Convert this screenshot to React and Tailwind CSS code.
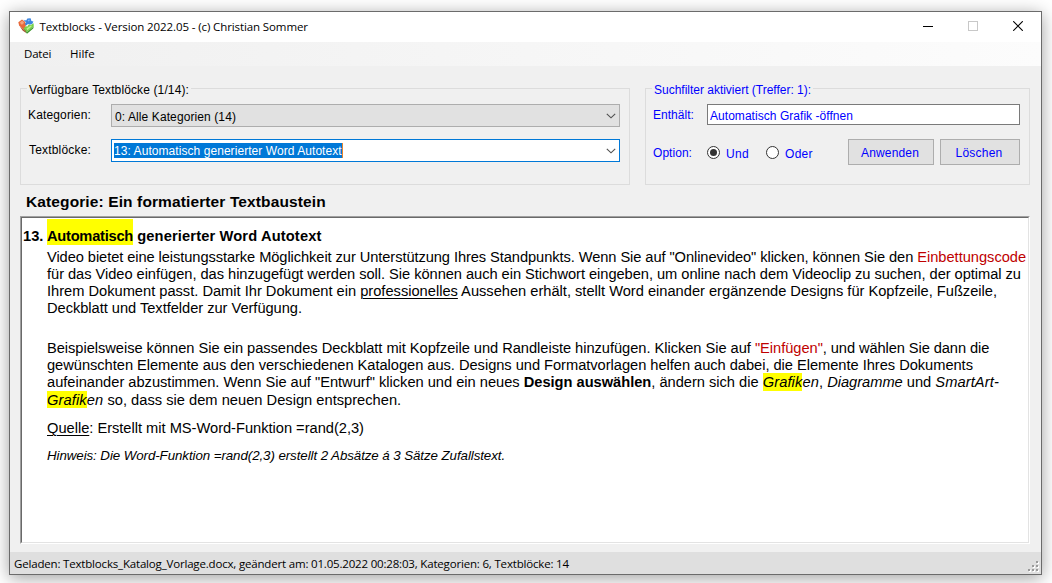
import React from "react";

function AppIcon() {
  return (
    <svg className="block h-4 w-4" viewBox="0 0 16 16">
      <path d="M0.3 4.2 L4 1.6 L6.8 3.4 L8.2 6.2 L7 10.5 L5.2 10.8 L1.2 7.4 Z" fill="#e8693a" />
      <path d="M1.2 7.4 L7.2 13.4 L8.4 15.2 L4.6 12.6 L0.6 6.6 Z" fill="#a8472c" />
      <path d="M1.2 7.2 L5.2 10.4 L7 9.4 L8.6 13.6 L7.6 14 Z" fill="#d9552c" />
      <path d="M2 4.2 L4.2 2.8 L6 4.2 L5 6.2 L3 6.4 Z" fill="#f4a27e" />
      <path d="M5.6 1.8 L8.2 2.6 L9.4 0.6 L12.6 0.2 L13.4 3 L15.4 3.6 L14.4 5.8 L11.8 6.8 L10 6 L8.2 7.4 L6.8 6 L8 4.4 Z" fill="#3d86e0" />
      <path d="M9.6 2.2 L11.2 1.6 L11.8 2.8 L10.4 3.6 Z" fill="#85b8f2" />
      <path d="M5.4 10.6 L8 8.2 L9.4 8.6 L10.4 6.8 L12.8 7 L15.6 5.2 L15.8 8.4 L9 14 Z" fill="#78d04a" />
      <path d="M8.4 10.4 L12.8 7.6 L14 8 L9.4 12.2 Z" fill="#b9f08b" />
      <path d="M5.4 10.8 L9 14 L15.8 8.4 L15.2 10.4 L9 15.8 Z" fill="#3b962a" />
    </svg>
  );
}

function Chevron() {
  return (
    <svg className="block h-[6px] w-[10px]" viewBox="0 0 10 6" fill="none">
      <path d="M0.8 0.8 L5 4.8 L9.2 0.8" stroke="#505050" strokeWidth="1.15" />
    </svg>
  );
}

function TitleBar() {
  return (
    <div className="flex h-[30px] shrink-0 items-center bg-white pl-2 font-['Open_Sans',sans-serif]">
      <div className="-mt-[3px]">
        <AppIcon />
      </div>
      <span className="ml-[5.5px] grow whitespace-nowrap text-[11.5px] leading-4 tracking-[-0.105px]">
        Textblocks - Version 2022.05 - (c) Christian Sommer
      </span>
      <div className="-mt-[2px] mr-[18px] flex items-center gap-[35px]">
        <svg className="block h-[10px] w-[10px]" viewBox="0 0 10 10">
          <rect x="0" y="5" width="10" height="1" fill="#000" />
        </svg>
        <svg className="block h-[10px] w-[10px]" viewBox="0 0 10 10">
          <rect x="0.5" y="0.5" width="9" height="9" fill="none" stroke="#c8c8c8" />
        </svg>
        <svg className="block h-[10px] w-[10px]" viewBox="0 0 10 10">
          <path d="M0.2 0.2 L9.8 9.8 M9.8 0.2 L0.2 9.8" stroke="#000" strokeWidth="1.1" />
        </svg>
      </div>
    </div>
  );
}

function MenuBar() {
  return (
    <div className="flex h-6 shrink-0 items-center bg-linear-to-r from-[#f0f0f0] to-[#fcfcfc] pl-[14px] font-['Open_Sans',sans-serif] text-[11.5px] leading-4">
      <span className="w-[46px] tracking-[-0.2px]">Datei</span>
      <span>Hilfe</span>
    </div>
  );
}

function CatalogGroup() {
  return (
    <fieldset className="h-[104px] w-[610px] border border-[#dcdcdc]">
      <legend className="ml-[6px] h-[15px] whitespace-nowrap px-[2px] leading-[19px] tracking-[0.119px]">
        Verfügbare Textblöcke (1/14):
      </legend>
      <div className="flex pl-[7px] pt-2">
        <span className="w-[83px] pt-[3px] leading-4 tracking-[0.146px]">Kategorien:</span>
        <div className="flex h-[23px] w-[509px] items-center justify-between border border-[#adadad] bg-[#e1e1e1] pl-[3px] pr-[3px]">
          <span className="pt-[3px] leading-4 tracking-[0.098px]">0: Alle Kategorien (14)</span>
          <Chevron />
        </div>
      </div>
      <div className="flex pl-2 pt-3">
        <span className="w-[82px] pt-[3px] leading-4 tracking-[0.179px]">Textblöcke:</span>
        <div className="flex h-[23px] w-[509px] items-center justify-between border border-[#0078d7] bg-white pl-[2px] pr-[3px]">
          <span className="h-[15px] border-r border-[#e8842a] bg-[#0078d7] leading-[17px] tracking-[0.06px] text-white">
            13: Automatisch generierter Word Autotext
          </span>
          <Chevron />
        </div>
      </div>
    </fieldset>
  );
}

function Radio({ checked }) {
  return (
    <svg className="block h-[13px] w-[13px]" viewBox="0 0 13 13">
      <circle cx="6.5" cy="6.5" r="6" fill="#fff" stroke="#333" />
      {checked && <circle cx="6.5" cy="6.5" r="3.5" fill="#333" />}
    </svg>
  );
}

function FilterGroup() {
  return (
    <fieldset className="h-[104px] w-[385px] border border-[#dcdcdc] text-[#0000ff]">
      <legend className="ml-[6px] h-[15px] whitespace-nowrap px-[2px] leading-[19px] tracking-[-0.011px]">
        Suchfilter aktiviert (Treffer: 1):
      </legend>
      <div className="flex pl-[7px] pt-2">
        <span className="w-[54px] pt-[3px] leading-4 tracking-[0.037px]">Enthält:</span>
        <div className="h-[21px] w-[313px] border border-[#7a7a7a] bg-white pl-[2px] pt-[3px] leading-4 tracking-[0.044px]">
          Automatisch Grafik -öffnen
        </div>
      </div>
      <div className="flex pl-[7px] pt-[14px]">
        <span className="w-[54px] pt-[6px] leading-4 tracking-[0.042px]">Option:</span>
        <div className="flex w-[141px] pt-[7px]">
          <Radio checked />
          <span className="ml-[6px] w-10 leading-4 tracking-[0.3px]">Und</span>
          <Radio />
          <span className="ml-[6px] leading-4 tracking-[0.3px]">Oder</span>
        </div>
        <button className="h-[26px] w-[86px] border border-[#adadad] bg-[#e1e1e1] pr-[2px] pt-[2px] leading-4 tracking-[0.16px]">
          Anwenden
        </button>
        <button className="ml-[6px] h-[26px] w-20 border border-[#adadad] bg-[#e1e1e1] pr-[2px] pt-[2px] leading-4 tracking-[0.232px]">
          Löschen
        </button>
      </div>
    </fieldset>
  );
}

function Preview() {
  return (
    <div className="ml-[10px] h-[328px] w-[1010px] border border-b-white border-l-[#a0a0a0] border-r-white border-t-[#a0a0a0]">
      <div className="h-full whitespace-nowrap border border-b-[#e3e3e3] border-l-[#696969] border-r-[#e3e3e3] border-t-[#696969] bg-white pt-[1px] text-[14.67px] leading-[19px]">
        <div className="flex h-[26px] pl-[1px] font-bold leading-[34px]">
          <span className="w-6">13.</span>
          <span className="h-[26px] w-[86px] bg-[#ffff00] tracking-[-0.25px]">Automatisch</span>
          <span className="whitespace-pre tracking-[0.14px]"> generierter Word Autotext</span>
        </div>
        <div className="pl-[25px] pt-[3px]">
          <p className="h-[17px] tracking-[-0.079px]">
            Video bietet eine leistungsstarke Möglichkeit zur Unterstützung Ihres Standpunkts. Wenn Sie auf "Onlinevideo"
            klicken, können Sie den <span className="tracking-[-0.02px] text-[#c00000]">Einbettungscode</span>
          </p>
          <p className="h-[17px] tracking-[-0.044px]">
            für das Video einfügen, das hinzugefügt werden soll. Sie können auch ein Stichwort eingeben, um online nach
            dem Videoclip zu suchen, der optimal zu
          </p>
          <p className="h-[17px] tracking-[-0.009px]">
            Ihrem Dokument passt. Damit Ihr Dokument ein{" "}
            <span className="underline decoration-1 underline-offset-2">professionelles</span> Aussehen erhält, stellt
            Word einander ergänzende Designs für Kopfzeile, Fußzeile,
          </p>
          <p className="h-[17px] tracking-[-0.035px]">Deckblatt und Textfelder zur Verfügung.</p>
          <p className="mt-[23px] h-[17px] tracking-[-0.039px]">
            Beispielsweise können Sie ein passendes Deckblatt mit Kopfzeile und Randleiste hinzufügen. Klicken Sie auf{" "}
            <span className="text-[#c00000]">"Einfügen"</span>
            <span className="tracking-[-0.09px]">, und wählen Sie dann die</span>
          </p>
          <p className="h-[17px] tracking-[-0.034px]">
            gewünschten Elemente aus den verschiedenen Katalogen aus. Designs und Formatvorlagen helfen auch dabei, die
            Elemente Ihres Dokuments
          </p>
          <p className="h-[18px] tracking-[-0.016px]">
            aufeinander abzustimmen. Wenn Sie auf "Entwurf" klicken und ein neues <b>Design auswählen</b>, ändern sich
            die{" "}
            <i className="tracking-[0.12px]">
              <span className="inline-block h-[18px] bg-[#ffff00] align-top">Grafik</span>en
            </i>
            , <i>Diagramme</i> und <i className="tracking-[0.1px]">SmartArt-</i>
          </p>
          <p className="h-[17px] tracking-[0.01px]">
            <i className="tracking-[0.12px]">
              <span className="inline-block h-[17px] bg-[#ffff00] align-top">Grafik</span>en
            </i>{" "}
            so, dass sie dem neuen Design entsprechen.
          </p>
          <p className="mt-[11px] h-[17px] tracking-[-0.017px]">
            <span className="underline decoration-1 underline-offset-2">Quelle</span>: Erstellt mit MS-Word-Funktion
            =rand(2,3)
          </p>
          <p className="mt-[11px] h-[17px] text-[13.33px] italic leading-[17px] tracking-[-0.08px]">
            Hinweis: Die Word-Funktion =rand(2,3) erstellt 2 Absätze á 3 Sätze Zufallstext.
          </p>
        </div>
      </div>
    </div>
  );
}

function StatusBar() {
  return (
    <div className="flex h-[22px] shrink-0 justify-between bg-[#dfdfdf] pl-[4px] font-['Open_Sans',sans-serif] text-[11.5px]">
      <span className="whitespace-nowrap pt-[4px] leading-4 tracking-[-0.18px]">
        Geladen: Textblocks_Katalog_Vorlage.docx, geändert am: 01.05.2022 00:28:03, Kategorien: 6, Textblöcke: 14
      </span>
      <svg className="mr-[2px] mt-[9px] block h-[11px] w-[11px]" viewBox="0 0 11 11">
        {[[8, 0], [4, 4], [8, 4], [0, 8], [4, 8], [8, 8]].map(([x, y]) => (
          <g key={x + "-" + y}>
            <rect x={x + 1} y={y + 1} width="2" height="2" fill="#fff" />
            <rect x={x} y={y} width="2" height="2" fill="#9a9a9a" />
          </g>
        ))}
      </svg>
    </div>
  );
}

export default function App() {
  return (
    <div className="h-[583px] w-[1052px] overflow-hidden bg-white pl-[9px] pt-[11px]">
      <div className="flex h-[564px] w-[1033px] flex-col border border-[#6b6b6b] bg-[#f0f0f0] font-['Liberation_Sans',sans-serif] text-xs text-black shadow-[0_3px_16px_rgba(0,0,0,0.38)]">
        <TitleBar />
        <MenuBar />
        <div className="flex gap-[15px] pl-[10px] pt-[15px]">
          <CatalogGroup />
          <FilterGroup />
        </div>
        <h1 className="h-[31px] whitespace-nowrap pl-4 pt-[9px] text-[15.5px] font-bold leading-4 tracking-[0.115px]">
          Kategorie: Ein formatierter Textbaustein
        </h1>
        <Preview />
        <div className="grow" />
        <StatusBar />
      </div>
    </div>
  );
}
